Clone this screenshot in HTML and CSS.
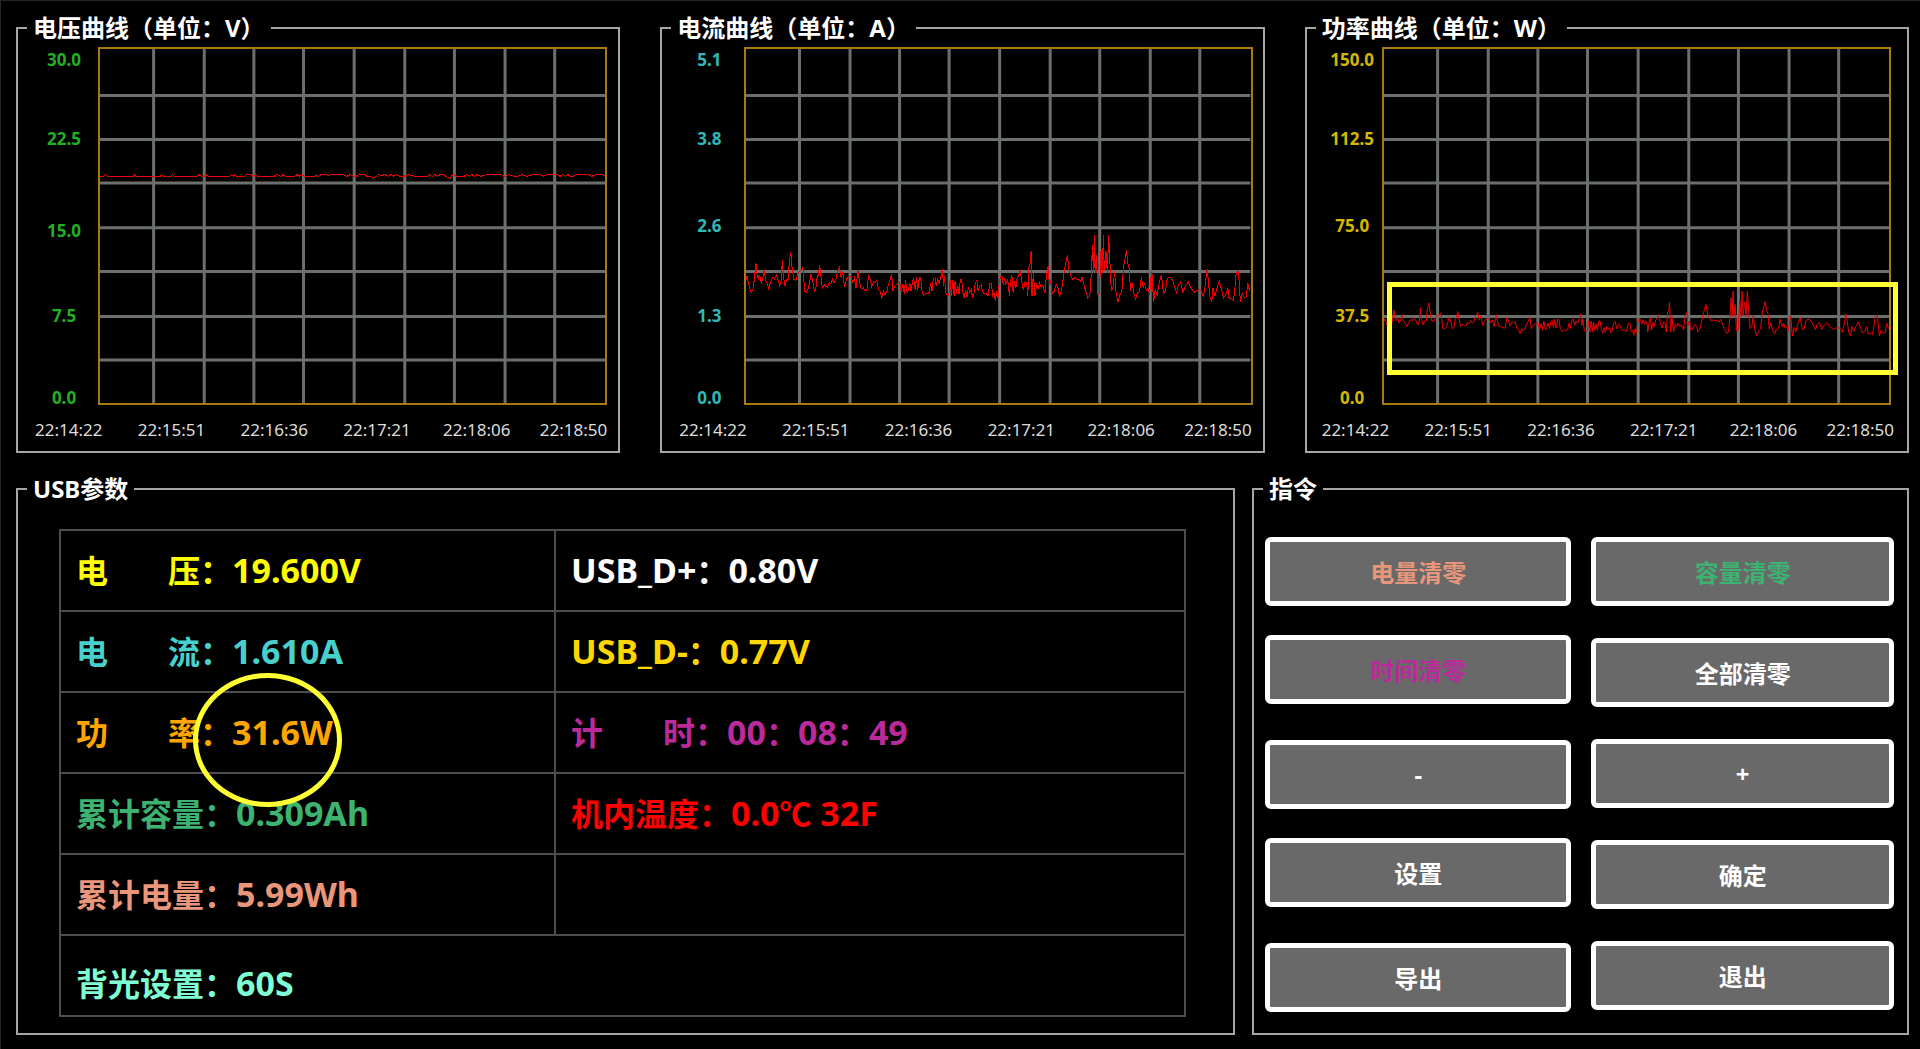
FILE: index.html
```html
<!DOCTYPE html>
<html lang="zh-CN">
<head>
    <meta charset="UTF-8">
    <meta name="viewport" content="width=device-width, initial-scale=1.0">
    <title>USB参数</title>
    <link rel="stylesheet" href="styles.css">
</head>
<body>
    <!-- shared grid and current curve -->
    <svg class="defs" width="0" height="0">
        <defs>
            <path id="grid" vector-effect="non-scaling-stroke" d="M162 0V1068M315 0V1068M465 0V1068M615 0V1068M768 0V1068M921 0V1068M1071 0V1068M1224 0V1068M1374 0V1068M0 140H1527M0 273H1527M0 404H1527M0 539H1527M0 671H1527M0 807H1527M0 938H1527"/>
            <polyline id="curve" vector-effect="non-scaling-stroke" transform="translate(-15 516)" points="15,180 18,170 22,188 26,205 31,218 36,210 40,180 42,160 45,130 48,160 52,178 56,165 61,190 66,175 70,152 74,180 79,190 84,207 88,190 93,180 97,172 102,178 107,165 112,180 117,198 121,185 123,160 125,120 128,170 133,198 138,180 143,180 146,125 151,98 155,150 160,180 166,182 172,160 178,155 183,150 187,143 190,180 193,215 198,218 204,205 208,185 212,162 217,185 222,215 226,210 230,175 234,165 238,137 242,170 246,205 252,195 257,200 262,203 267,188 272,192 277,178 282,190 287,180 292,155 298,142 303,175 308,158 313,202 318,182 323,172 328,170 333,172 338,188 343,175 348,205 351,180 354,152 359,190 364,207 370,205 375,212 381,212 386,165 391,180 396,202 401,185 406,190 411,182 416,210 421,215 426,237 431,215 436,225 441,218 446,195 451,180 456,163 460,215 465,200 470,195 475,190 480,188 485,218 490,192 494,222 498,180 503,220 507,210 511,190 515,215 519,185 523,178 527,210 531,172 535,212 540,172 544,175 548,215 553,228 559,222 565,222 570,218 574,190 578,215 582,178 587,172 591,200 595,180 600,190 605,170 610,147 613,200 616,170 620,220 625,230 629,228 633,180 637,230 641,180 645,228 648,185 652,222 656,195 660,222 664,180 668,180 672,220 676,235 680,210 684,232 688,205 693,218 697,210 701,235 705,222 709,190 714,182 718,215 722,200 727,195 731,215 736,222 742,222 748,228 753,190 758,190 762,228 766,222 770,245 774,215 778,235 782,185 786,170 790,172 794,195 798,175 802,195 806,180 810,190 812,230 816,185 820,165 824,220 828,185 832,205 836,175 840,170 845,152 850,185 855,212 860,185 865,190 868,230 872,140 876,130 878,95 881,230 885,160 890,228 895,195 900,205 904,190 909,205 914,198 920,220 925,160 930,140 934,200 938,180 942,222 948,215 954,195 960,205 964,230 970,215 975,180 981,140 988,105 993,150 998,165 1004,180 1010,175 1016,180 1022,178 1028,185 1032,172 1038,195 1044,215 1050,235 1056,230 1060,170 1064,75 1067,160 1070,45 1072,160 1076,105 1080,225 1085,222 1090,90 1094,160 1097,45 1100,155 1105,95 1109,160 1113,45 1117,130 1121,215 1127,200 1131,155 1135,215 1141,248 1147,225 1153,215 1158,140 1162,120 1167,92 1171,130 1176,150 1179,215 1184,190 1190,225 1195,238 1200,220 1207,215 1212,172 1218,205 1222,190 1227,212 1232,205 1237,225 1241,175 1244,158 1249,248 1254,210 1260,228 1266,190 1273,165 1279,220 1285,215 1290,178 1296,172 1302,175 1308,185 1314,205 1319,220 1324,195 1331,187 1338,218 1345,200 1354,187 1362,205 1372,218 1380,212 1388,210 1394,215 1400,232 1405,200 1411,148 1415,180 1419,230 1425,248 1429,205 1435,228 1441,205 1448,185 1455,210 1461,235 1468,225 1474,205 1478,238 1484,235 1491,242 1496,200 1499,160 1506,155 1512,248 1517,222 1524,235 1530,232 1534,190 1540,215"/>
        </defs>
    </svg>

    <div class="charts">
        <fieldset class="panel chart voltage">
            <legend>电压曲线（单位：V）</legend>
            <div class="chart-body">
                <div class="y-axis">
                    <span>30.0</span><span>22.5</span><span>15.0</span><span>7.5</span><span>0.0</span>
                </div>
                <div class="plot">
                    <svg viewBox="0 0 1527 1068" preserveAspectRatio="none">
                        <use href="#grid" class="grid"/>
                        <polyline class="line" vector-effect="non-scaling-stroke" points="0,384 12,384 17,379 22,384 100,384 105,379 110,384 182,384 186,379 191,384 214,384 219,379 224,384 292,384 299,379 306,384 318,384 323,379 328,384 392,384 397,379 402,384 407,379 412,384 436,384 444,379 456,379 462,384 470,379 476,384 526,384 534,379 546,384 553,379 560,384 588,384 595,379 602,384 610,379 618,384 648,384 655,380 660,384 668,379 684,379 690,382 698,379 736,379 746,384 756,379 766,384 774,384 782,379 798,379 808,385 818,385 826,390 834,385 842,379 852,382 860,379 872,384 880,379 888,384 896,379 906,384 918,384 930,379 944,382 954,384 990,384 998,379 1004,384 1012,379 1020,384 1028,379 1040,379 1050,388 1058,390 1066,379 1078,384 1100,384 1108,379 1116,384 1124,379 1132,384 1140,379 1150,384 1166,379 1212,379 1224,384 1236,379 1250,384 1262,384 1274,379 1290,384 1308,379 1330,379 1340,384 1350,379 1382,379 1390,384 1398,379 1406,384 1414,379 1422,384 1430,384 1438,379 1476,379 1486,384 1500,379 1518,379 1527,384"/>
                    </svg>
                </div>
            </div>
            <div class="x-axis">
                <span>22:14:22</span><span>22:15:51</span><span>22:16:36</span><span>22:17:21</span><span>22:18:06</span><span>22:18:50</span>
            </div>
        </fieldset>

        <fieldset class="panel chart current">
            <legend>电流曲线（单位：A）</legend>
            <div class="chart-body">
                <div class="y-axis">
                    <span>5.1</span><span>3.8</span><span>2.6</span><span>1.3</span><span>0.0</span>
                </div>
                <div class="plot">
                    <svg viewBox="0 0 1527 1068" preserveAspectRatio="none">
                        <use href="#grid" class="grid"/>
                        <use href="#curve" class="line"/>
                    </svg>
                </div>
            </div>
            <div class="x-axis">
                <span>22:14:22</span><span>22:15:51</span><span>22:16:36</span><span>22:17:21</span><span>22:18:06</span><span>22:18:50</span>
            </div>
        </fieldset>

        <fieldset class="panel chart power">
            <legend>功率曲线（单位：W）</legend>
            <div class="chart-body">
                <div class="y-axis">
                    <span>150.0</span><span>112.5</span><span>75.0</span><span>37.5</span><span>0.0</span>
                </div>
                <div class="plot">
                    <svg viewBox="0 0 1527 1068" preserveAspectRatio="none">
                        <use href="#grid" class="grid"/>
                        <use href="#curve" class="line" transform="translate(0 357) scale(1 0.666)"/>
                    </svg>
                    <div class="mark-box"></div>
                </div>
            </div>
            <div class="x-axis">
                <span>22:14:22</span><span>22:15:51</span><span>22:16:36</span><span>22:17:21</span><span>22:18:06</span><span>22:18:50</span>
            </div>
        </fieldset>
    </div>

    <div class="bottom">
        <fieldset class="panel params">
            <legend>USB参数</legend>
            <div class="table-wrap">
                <table>
                    <tr>
                        <td class="yellow"><span class="name">电<i></i>压：</span>19.600V</td>
                        <td class="white">USB_D+<span class="name">：</span>0.80V</td>
                    </tr>
                    <tr>
                        <td class="turquoise"><span class="name">电<i></i>流：</span>1.610A</td>
                        <td class="gold">USB_D-<span class="name">：</span>0.77V</td>
                    </tr>
                    <tr>
                        <td class="orange"><span class="name">功<i></i>率：</span>31.6W<div class="mark-circle"></div></td>
                        <td class="purple"><span class="name">计<i></i>时：</span>00<span class="name">：</span>08<span class="name">：</span>49</td>
                    </tr>
                    <tr>
                        <td class="green"><span class="name">累计容量：</span>0.309Ah</td>
                        <td class="red"><span class="name">机内温度：</span>0.0<span class="name">℃</span> 32F</td>
                    </tr>
                    <tr>
                        <td class="salmon"><span class="name">累计电量：</span>5.99Wh</td>
                        <td></td>
                    </tr>
                    <tr>
                        <td class="aqua backlight" colspan="2"><span class="name">背光设置：</span>60S</td>
                    </tr>
                </table>
            </div>
        </fieldset>

        <fieldset class="panel commands">
            <legend>指令</legend>
            <div class="btn-columns">
                <div class="btn-group left">
                    <button type="button" class="salmon">电量清零</button>
                    <button type="button" class="purple">时间清零</button>
                    <button type="button">-</button>
                    <button type="button">设置</button>
                    <button type="button">导出</button>
                </div>
                <div class="btn-group right">
                    <button type="button" class="green">容量清零</button>
                    <button type="button">全部清零</button>
                    <button type="button">+</button>
                    <button type="button">确定</button>
                    <button type="button">退出</button>
                </div>
            </div>
        </fieldset>
    </div>
</body>
</html>
```

FILE: styles.css
```css
* {
    box-sizing: border-box;
}
body {
    margin: 0;
    min-height: 100vh;
    padding: 11px 11px 15px 15px;
    border-top: 1px solid #262626;
    border-left: 1px solid #262626;
    background: #000;
    color: #fff;
    font-family: "Noto Sans", "Noto Sans CJK SC", sans-serif;
    display: flex;
    flex-direction: column;
    gap: 20px;
}
.defs {
    position: absolute;
}
.panel {
    margin: 0;
    min-width: 0;
    padding: 0;
    border: 2px solid #a6a6a6;
}
legend {
    margin-left: 9px;
    padding: 0 6px;
    font-size: 24px;
    line-height: 32px;
    font-weight: bold;
}

/* charts */
.charts {
    display: grid;
    grid-template-columns: repeat(3, 1fr);
    gap: 40px;
}
.chart-body {
    display: grid;
    grid-template-columns: 80px 1fr;
    padding: 3px 11px 0 0;
}
.y-axis {
    display: grid;
    grid-template-rows: 79fr 87fr 89fr 82fr auto;
    justify-items: center;
    padding: 6px 0 0 12px;
    font-size: 17px;
    line-height: 14px;
    font-weight: bold;
}
.plot {
    position: relative;
    height: 358px;
    border: 2px solid #a87a12;
}
.plot svg {
    display: block;
    width: 100%;
    height: 100%;
}
.grid {
    fill: none;
    stroke: #6c706c;
    stroke-width: 3px;
}
.line {
    fill: none;
    stroke: #f00000;
    stroke-width: 1px;
    shape-rendering: crispEdges;
}
.x-axis {
    display: grid;
    grid-template-columns: 103fr 103fr 103fr 100fr 97fr auto;
    padding: 12px 11px 8px 17px;
    color: #ddd;
    font-size: 17px;
    line-height: 26px;
}
.voltage .y-axis {
    color: #22b022;
    grid-template-rows: 79fr 91fr 85fr 82fr auto;
}
.current .y-axis {
    color: #30b8b8;
}
.current .chart-body {
    grid-template-columns: 82px 1fr;
    padding-right: 10px;
}
.power .y-axis {
    color: #d4b800;
    padding-left: 16px;
}
.power .chart-body {
    grid-template-columns: 75px 1fr;
    padding-right: 16px;
}
.power .x-axis {
    padding: 12px 13px 8px 15px;
}
.mark-box {
    position: absolute;
    top: 233px;
    left: 3px;
    right: -9px;
    height: 93px;
    border: 5px solid #ffff33;
}

/* parameters and commands */
.bottom {
    flex: 1;
    display: grid;
    grid-template-columns: 1219fr 657fr;
    gap: 17px;
}
.table-wrap {
    padding: 24px 47px 16px 41px;
}
table {
    width: 100%;
    table-layout: fixed;
    border-collapse: collapse;
}
td {
    position: relative;
    height: 81px;
    padding: 0 15px 3px;
    border: 2px solid #4d4d4d;
    font-size: 34px;
    line-height: 40px;
    font-weight: bold;
    white-space: nowrap;
}
td:first-child {
    width: 44%;
}
td.backlight {
    padding-top: 16px;
}
.name {
    font-family: "Noto Sans CJK SC", sans-serif;
    font-size: 32px;
}
.name i {
    display: inline-block;
    width: 60px;
}
.mark-circle {
    position: absolute;
    z-index: 1;
    top: -20px;
    left: 132px;
    width: 149px;
    height: 134px;
    border: 5px solid #ffff33;
    border-radius: 50%;
}
.btn-columns {
    display: grid;
    grid-template-columns: 307fr 303fr;
    gap: 20px;
    padding: 32px 13px 0 11px;
}
.btn-group {
    display: flex;
    flex-direction: column;
    gap: 32px;
}
.btn-group.left {
    gap: 29px;
}
.btn-group.left button:nth-child(even) {
    margin-bottom: 7px;
}
button {
    height: 69px;
    padding: 0;
    border: 5px solid #fff;
    border-radius: 6px;
    background: #696969;
    color: #fff;
    font-family: "Noto Sans", "Noto Sans CJK SC", sans-serif;
    font-size: 24px;
    font-weight: bold;
    cursor: pointer;
}

.yellow { color: #ffff00; }
.turquoise { color: #48d1cc; }
.orange { color: #ffa500; }
.green { color: #3cb371; }
.salmon { color: #e9967a; }
.aqua { color: #7fffd4; }
.gold { color: #ffd700; }
.purple { color: #bb2a9b; }
.red { color: #ff0000; }
```
